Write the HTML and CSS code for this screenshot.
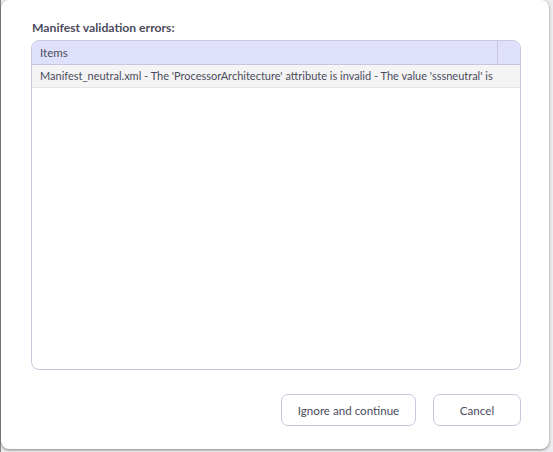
FILE: index.html
```html
<!DOCTYPE html>
<html>
<head>
<meta charset="utf-8">
<link rel="stylesheet" href="styles.css">
</head>
<body>
<div class="backdrop">
  <div class="dialog">
    <div class="title">Manifest validation errors:</div>
    <div class="list">
      <div class="list-head">
        <div class="col-items">Items</div>
        <div class="col-spacer"></div>
      </div>
      <div class="row">Manifest_neutral.xml - The 'ProcessorArchitecture' attribute is invalid - The value 'sssneutral' is</div>
    </div>
    <div class="actions">
      <button class="btn btn-ignore">Ignore and continue</button>
      <button class="btn btn-cancel">Cancel</button>
    </div>
  </div>
</div>
</body>
</html>
```

FILE: styles.css
```css
html, body {
  margin: 0;
  padding: 0;
}
body {
  width: 553px;
  height: 452px;
  overflow: hidden;
  background: #e9e9ec;
  font-family: Lato, "Noto Sans", sans-serif;
}
.backdrop {
  width: 553px;
  height: 452px;
  padding: 0 4px 3px 1px;
  box-sizing: border-box;
  background: linear-gradient(to right, #8a8a8a 0, #8a8a8a 1px, #ececee 1px);
}
.dialog {
  height: 449px;
  box-sizing: border-box;
  background: #ffffff;
  border-radius: 8px;
  box-shadow: 0 1px 3px rgba(0,0,0,0.45);
  padding: 19px 28px 0 30px;
  display: flex;
  flex-direction: column;
}
.title {
  font-size: 12.2px;
  font-weight: 700;
  color: #4b4b5c;
  line-height: 18px;
  margin-bottom: 3px;
  padding-left: 1px;
}
.list {
  height: 330px;
  box-sizing: border-box;
  border: 1px solid #c9c6dd;
  border-radius: 8px;
  overflow: hidden;
}
.list-head {
  display: flex;
  height: 24px;
  box-sizing: border-box;
  background: #dfe0fb;
  border-bottom: 1px solid #c9c6dd;
}
.col-items {
  flex: 1;
  padding-left: 8px;
  font-size: 11.5px;
  line-height: 23px;
  color: #4b4b5c;
  border-right: 1px solid #c9c6dd;
}
.col-spacer {
  width: 22px;
}
.row {
  height: 23px;
  box-sizing: border-box;
  background: #f4f4f5;
  border-bottom: 1px solid #e6e6e9;
  padding-left: 8px;
  font-size: 11px;
  line-height: 22px;
  color: #4b4b5c;
  white-space: nowrap;
  overflow: hidden;
}
.actions {
  display: flex;
  justify-content: flex-end;
  gap: 17px;
  margin-top: 24px;
}
.btn {
  height: 32px;
  box-sizing: border-box;
  background: #ffffff;
  border: 1px solid #c9c6dd;
  border-radius: 7px;
  font-family: Lato, "Noto Sans", sans-serif;
  font-size: 11.6px;
  color: #4b4b5c;
  padding: 0;
}
.btn-ignore {
  width: 135px;
}
.btn-cancel {
  width: 88px;
}
```
